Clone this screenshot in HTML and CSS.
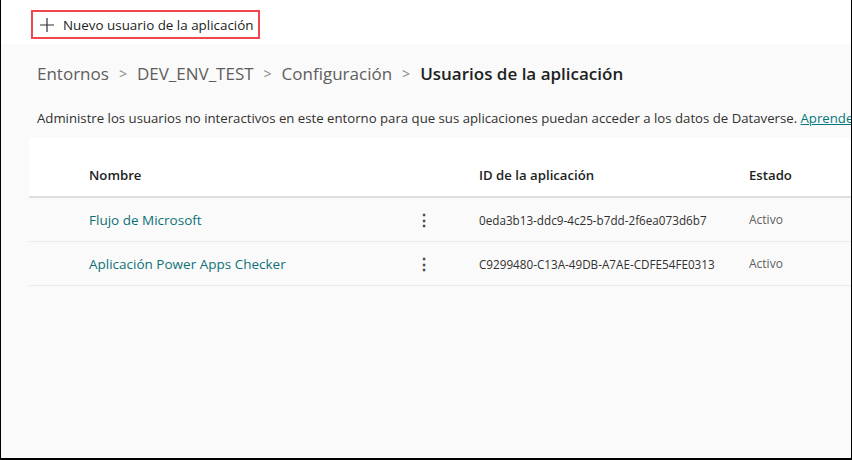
FILE: index.html
```html
<!DOCTYPE html>
<html lang="es">
<head>
<meta charset="utf-8">
<link rel="stylesheet" href="styles.css">
</head>
<body>
<div class="frame">
  <header class="cmdbar">
    <button class="cmd-btn">
      <svg class="plus" width="16" height="16" viewBox="0 0 16 16"><path d="M8 1v14M1 8h14" stroke="#323130" stroke-width="1.2" fill="none"/></svg>
      <span>Nuevo usuario de la aplicación</span>
    </button>
  </header>
  <main class="content">
    <nav class="crumbs">
      <span class="crumb">Entornos</span><span class="sep">&gt;</span>
      <span class="crumb">DEV_ENV_TEST</span><span class="sep">&gt;</span>
      <span class="crumb">Configuración</span><span class="sep">&gt;</span>
      <span class="crumb current">Usuarios de la aplicación</span>
    </nav>
    <p class="desc">Administre los usuarios no interactivos en este entorno para que sus aplicaciones puedan acceder a los datos de Dataverse. <a href="#">Aprender más</a></p>
    <div class="grid">
      <div class="row head">
        <div class="c-name">Nombre</div>
        <div class="c-more"></div>
        <div class="c-id">ID de la aplicación</div>
        <div class="c-state">Estado</div>
      </div>
      <div class="row">
        <div class="c-name link">Flujo de Microsoft</div>
        <div class="c-more">⋮</div>
        <div class="c-id">0eda3b13-ddc9-4c25-b7dd-2f6ea073d6b7</div>
        <div class="c-state">Activo</div>
      </div>
      <div class="row">
        <div class="c-name link">Aplicación Power Apps Checker</div>
        <div class="c-more">⋮</div>
        <div class="c-id">C9299480-C13A-49DB-A7AE-CDFE54FE0313</div>
        <div class="c-state">Activo</div>
      </div>
    </div>
  </main>
</div>
</body>
</html>
```
FILE: styles.css
```css
html, body {
  margin: 0;
  padding: 0;
  width: 852px;
  height: 460px;
  overflow: hidden;
}
body {
  font-family: "Open Sans", "Noto Sans", sans-serif;
  color: #323130;
}
.frame {
  box-sizing: border-box;
  width: 852px;
  height: 460px;
  border-left: 1px solid #000;
  border-right: 1px solid #000;
  border-bottom: 2px solid #000;
  background: #fafafa;
  display: flex;
  flex-direction: column;
  overflow: hidden;
}
.cmdbar {
  height: 44px;
  background: #fff;
  flex: none;
  display: flex;
  align-items: flex-start;
  padding: 10px 0 0 30px;
  box-sizing: border-box;
}
.cmd-btn {
  display: flex;
  align-items: center;
  gap: 8px;
  height: 29px;
  box-sizing: border-box;
  border: 2px solid #f0464c;
  background: #fff;
  padding: 0 5px 0 6px;
  font-family: inherit;
  font-size: 13.4px;
  color: #201f1e;
  cursor: pointer;
}
.plus { flex: none; }
.content {
  padding-left: 36px;
  display: flex;
  flex-direction: column;
}
.crumbs {
  display: flex;
  align-items: center;
  height: 28px;
  margin-top: 15px;
  font-size: 17px;
  white-space: nowrap;
}
.crumb { color: #605e5c; }
.sep {
  color: #8a8886;
  font-size: 14px;
  margin: 0 10px;
}
.crumb.current {
  color: #201f1e;
  font-weight: 600;
}
.desc {
  margin: 22px 0 0 0;
  font-size: 13.2px;
  white-space: nowrap;
  color: #323130;
  line-height: 18px;
}
.desc a {
  color: #03787c;
  text-decoration: underline;
}
.grid {
  margin: 11px 0 0 -8px;
  width: 900px;
}
.row {
  display: flex;
  align-items: center;
  height: 43px;
  border-bottom: 1px solid #edebe9;
  font-size: 11.7px;
}
.row.head {
  background: #fff;
  height: 60px;
  align-items: flex-end;
  padding-bottom: 12px;
  box-sizing: border-box;
  border-bottom: 2px solid #e1dfdd;
  font-size: 13.2px;
  font-weight: 600;
  color: #201f1e;
}
.c-name { width: 327px; padding-left: 60px; flex: none; }
.c-more { width: 63px; flex: none; font-size: 16px; font-weight: 700; color: #484644; }
.c-id { width: 270px; flex: none; }
.c-state { flex: none; color: #605e5c; font-size: 12px; }
.head .c-state { color: #201f1e; font-size: 13.2px; }
.link { color: #0e7178; font-size: 13.5px; }
```
